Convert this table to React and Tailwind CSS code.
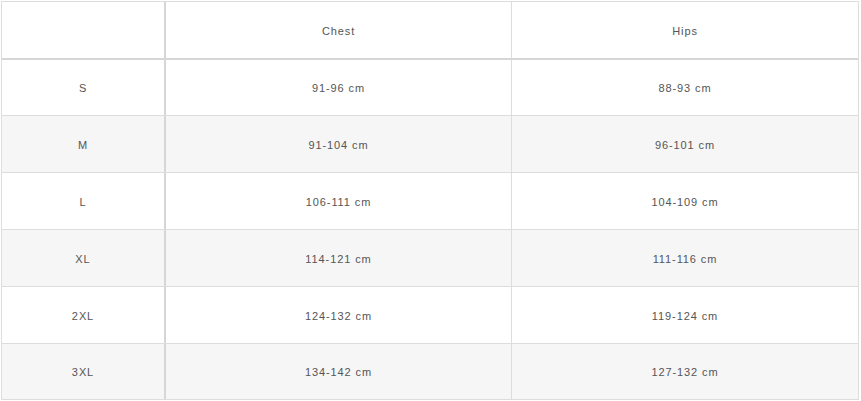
import React from "react";

const rows = [
  { size: "S", chest: "91-96 cm", hips: "88-93 cm", h: "h-[56px]" },
  { size: "M", chest: "91-104 cm", hips: "96-101 cm", h: "h-[57px]" },
  { size: "L", chest: "106-111 cm", hips: "104-109 cm", h: "h-[57px]" },
  { size: "XL", chest: "114-121 cm", hips: "111-116 cm", h: "h-[57px]" },
  { size: "2XL", chest: "124-132 cm", hips: "119-124 cm", h: "h-[57px]" },
  { size: "3XL", chest: "134-142 cm", hips: "127-132 cm", h: "h-[55px]" },
];

const SizeChart = () => {
  return (
    <div className="min-h-[401px] bg-white pt-[1px] pl-[1px]">
      <div
        className="w-[858px] border border-[#dddddd] text-[11px] tracking-[0.9px] text-[#555555]"
        style={{ fontFamily: '"Liberation Sans", Arial, sans-serif' }}
      >
        <div className="flex h-[58px] border-b-2 border-[#d6d6d6]">
          <div className="w-[164px] border-r-2 border-[#d6d6d6]" />
          <div className="flex w-[346px] items-center justify-center border-r border-[#dddddd] pt-[3px]">
            Chest
          </div>
          <div className="flex flex-1 items-center justify-center pt-[3px]">Hips</div>
        </div>
        {rows.map((row, i) => (
          <div
            key={row.size}
            className={`flex ${row.h} ${i % 2 === 1 ? "bg-[#f6f6f6]" : "bg-white"} ${
              i < rows.length - 1 ? "border-b border-[#dddddd]" : ""
            }`}
          >
            <div className="flex w-[164px] items-center justify-center border-r-2 border-[#d6d6d6] pt-[2px]">
              {row.size}
            </div>
            <div className="flex w-[346px] items-center justify-center border-r border-[#dddddd] pt-[2px]">
              {row.chest}
            </div>
            <div className="flex flex-1 items-center justify-center pt-[2px]">{row.hips}</div>
          </div>
        ))}
      </div>
    </div>
  );
};

export default SizeChart;
